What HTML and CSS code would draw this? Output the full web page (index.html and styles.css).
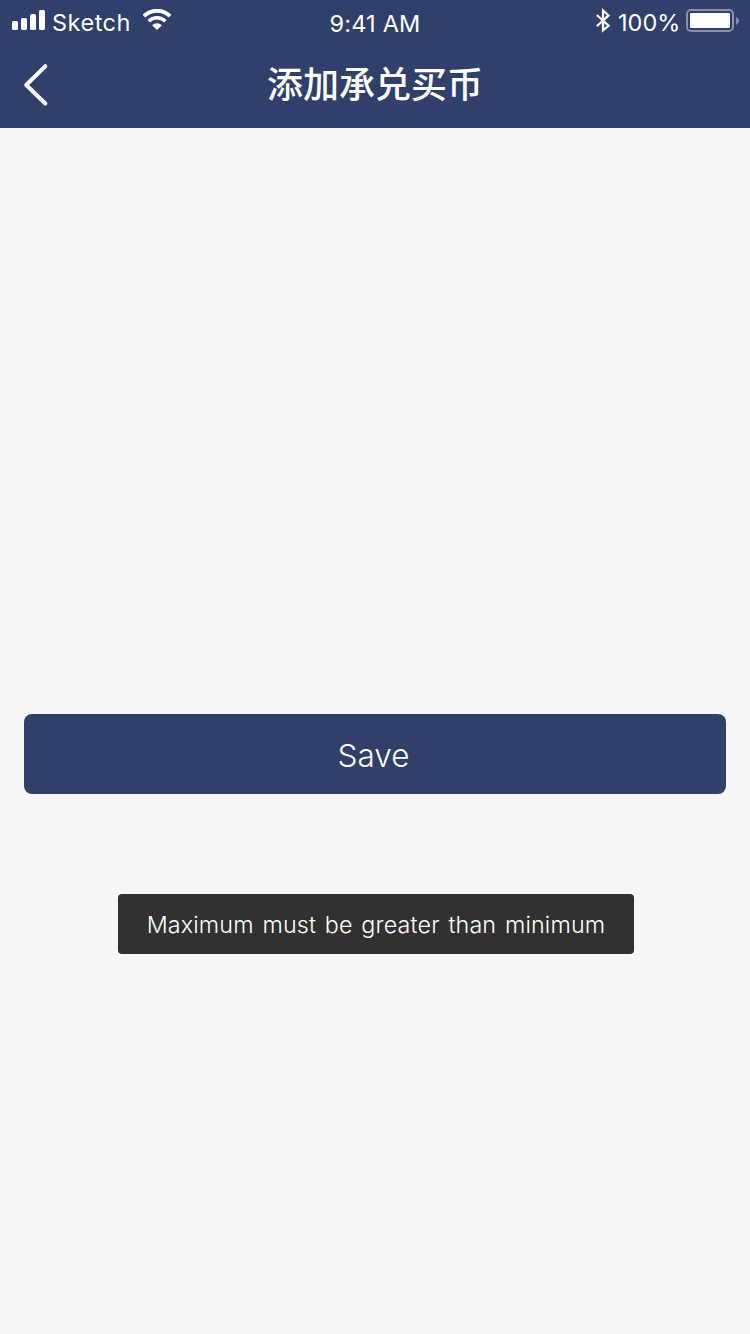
FILE: index.html
```html
<!DOCTYPE html>
<html lang="zh-CN">
<head>
<meta charset="utf-8">
<title>添加承兑买币</title>
<link rel="stylesheet" href="styles.css">
</head>
<body>
<div class="screen">
  <header class="header">
    <div class="status">
      <div class="status-left">
        <svg class="signal" width="34" height="20" viewBox="0 0 34 20" fill="#fff">
          <rect x="0" y="11" width="6" height="9" rx="1.6"/>
          <rect x="9" y="8" width="6" height="12" rx="1.6"/>
          <rect x="18" y="4" width="6" height="16" rx="1.6"/>
          <rect x="27" y="0" width="6" height="20" rx="1.6"/>
        </svg>
        <span class="carrier">Sketch</span>
        <svg class="wifi" width="30" height="22" viewBox="0 0 30 22" fill="none" stroke="#fff">
          <path d="M1.9 7.2A18.6 18.6 0 0 1 28.1 7.2" stroke-width="3.8"/>
          <path d="M6.7 12.2A11.8 11.8 0 0 1 23.3 12.2" stroke-width="3.6"/>
          <path d="M10.1 16.2A7 7 0 0 1 19.9 16.2L15 21Z" fill="#fff" stroke="none"/>
        </svg>
      </div>
      <span class="time">9:41 AM</span>
      <div class="status-right">
        <svg class="bluetooth" width="16" height="26" viewBox="0 0 16 26" fill="none" stroke="#fff" stroke-width="2.2">
          <path d="M1.8 7L13.6 17.8L8 22.4V2.4L13.6 7.4L1.8 18.2"/>
        </svg>
        <span class="percent">100%</span>
        <svg class="battery" width="54" height="24" viewBox="0 0 54 24">
          <rect x="1" y="1" width="46" height="21" rx="4" fill="none" stroke="#8791ad" stroke-width="2"/>
          <rect x="4" y="4" width="40" height="15" rx="1" fill="#fff"/>
          <path d="M50 8Q53 9.3 53 12Q53 14.7 50 16Z" fill="#8791ad"/>
        </svg>
      </div>
    </div>
    <nav class="nav">
      <svg class="back" width="26" height="44" viewBox="0 0 26 44" fill="none" stroke="#fff" stroke-width="4" stroke-linecap="round" stroke-linejoin="round">
        <path d="M22.3 3.2L3.2 22L22.3 40.5"/>
      </svg>
      <h1 class="title">添加承兑买币</h1>
    </nav>
  </header>
  <main class="content">
    <button class="save"><span class="save-label">Save</span></button>
    <div class="toast"><span class="toast-label">Maximum must be greater than minimum</span></div>
  </main>
</div>
</body>
</html>
```
FILE: styles.css
```css
* {
  box-sizing: border-box;
}

body {
  margin: 0;
  background: #f7f7f7;
  color: #fff;
  font-family: Inter, "Liberation Sans", "Noto Sans CJK SC", sans-serif;
}

.screen {
  width: 750px;
  height: 1334px;
  overflow: hidden;
}

.header {
  height: 128px;
  background: #2f406b;
}

.status {
  display: grid;
  grid-template-columns: 1fr auto 1fr;
  height: 40px;
  font-size: 23.5px;
  line-height: 30px;
  white-space: nowrap;
}

.status-left,
.status-right {
  display: flex;
  align-items: flex-start;
}

.status-left {
  padding-left: 12px;
}

.status-right {
  justify-content: flex-end;
  padding-right: 10px;
}

.signal {
  margin-top: 10px;
}

.carrier {
  margin: 8px 0 0 6px;
  width: 84px;
  font-weight: 400;
  letter-spacing: 0.5px;
}

.wifi {
  margin: 9px 0 0 6px;
}

.time {
  margin-top: 9px;
  font-weight: 400;
  letter-spacing: 0.2px;
}

.bluetooth {
  margin-top: 8px;
}

.percent {
  margin: 8px 0 0 7px;
  width: 62px;
  font-weight: 400;
}

.battery {
  margin: 9px 0 0 6px;
}

.nav {
  display: grid;
  grid-template-columns: 128px 1fr 128px;
  height: 88px;
}

.back {
  margin: 23px 0 0 23px;
}

.title {
  margin: 16px 0 0;
  font-family: "Noto Sans CJK SC", sans-serif;
  font-size: 36px;
  font-weight: 500;
  line-height: 52px;
  text-align: center;
}

.content {
  display: flex;
  flex-direction: column;
  align-items: center;
  padding: 586px 24px 0;
}

.save {
  width: 100%;
  height: 80px;
  padding: 4px 3px 0 0;
  border: 0;
  border-radius: 8px;
  background: #2f406b;
  color: #fff;
  font-family: inherit;
  font-size: 31.5px;
  font-weight: 300;
  line-height: 40px;
}

.toast {
  width: 516px;
  height: 60px;
  margin: 100px 0 0 2px;
  padding-top: 1px;
  border-radius: 4px;
  background: #313131;
  font-size: 23.3px;
  font-weight: 300;
  line-height: 60px;
  letter-spacing: 0.16px;
  text-align: center;
  white-space: nowrap;
  word-spacing: 2px;
}
```
